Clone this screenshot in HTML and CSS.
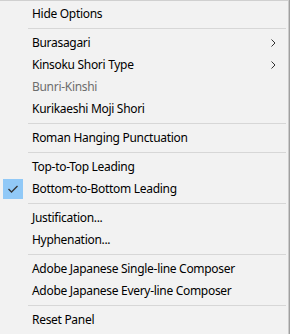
FILE: index.html
```html
<!DOCTYPE html>
<html lang="en">
<head>
    <meta charset="UTF-8">
    <meta name="viewport" content="width=device-width, initial-scale=1.0">
    <title>Panel Menu</title>
    <link rel="stylesheet" href="styles.css">
</head>
<body>
    <div class="menu">
        <div class="item">Hide Options</div>
        <div class="sep"></div>
        <div class="item">Burasagari
            <svg class="arrow" width="5" height="8" viewBox="0 0 5 8"><path d="M0.5 0.5 L4 4 L0.5 7.5" fill="none" stroke="#333" stroke-width="1"/></svg>
        </div>
        <div class="item">Kinsoku Shori Type
            <svg class="arrow" width="5" height="8" viewBox="0 0 5 8"><path d="M0.5 0.5 L4 4 L0.5 7.5" fill="none" stroke="#333" stroke-width="1"/></svg>
        </div>
        <div class="item disabled">Bunri-Kinshi</div>
        <div class="item">Kurikaeshi Moji Shori</div>
        <div class="sep"></div>
        <div class="item">Roman Hanging Punctuation</div>
        <div class="sep"></div>
        <div class="item">Top-to-Top Leading</div>
        <div class="item checked">
            <span class="check">
                <svg width="12" height="10" viewBox="0 0 12 10"><path d="M1.5 5 L4.5 8 L10.5 2" fill="none" stroke="#333" stroke-width="1.3"/></svg>
            </span>
            Bottom-to-Bottom Leading
        </div>
        <div class="sep"></div>
        <div class="item">Justification...</div>
        <div class="item">Hyphenation...</div>
        <div class="sep"></div>
        <div class="item">Adobe Japanese Single-line Composer</div>
        <div class="item">Adobe Japanese Every-line Composer</div>
        <div class="sep"></div>
        <div class="item">Reset Panel</div>
    </div>
</body>
</html>
```

FILE: styles.css
```css
body {
    margin: 0;
    padding: 0;
    background: #a0a0a0;
    font-family: "Noto Sans", "Open Sans", sans-serif;
    font-size: 12px;
    letter-spacing: -0.3px;
    color: #000;
}

.menu {
    width: 288px;
    height: 331px;
    padding-top: 2px;
    background: #f2f2f2;
    border-top: 1px solid #d0d0d0;
    border-right: 1px solid #cccccc;
    border-bottom: 1px solid #b8b8b8;
}

.item {
    position: relative;
    height: 22px;
    line-height: 22px;
    padding-left: 32px;
    white-space: nowrap;
}

.disabled {
    color: #6d6d6d;
}

.arrow {
    position: absolute;
    right: 12px;
    top: 7px;
}

.check {
    position: absolute;
    left: 3px;
    top: 1px;
    width: 20px;
    height: 20px;
    background: #91c9f7;
    display: flex;
    align-items: center;
    justify-content: center;
}

.sep {
    height: 1px;
    margin: 3px 2px 3px 28px;
    background: #d7d7d7;
}
```
